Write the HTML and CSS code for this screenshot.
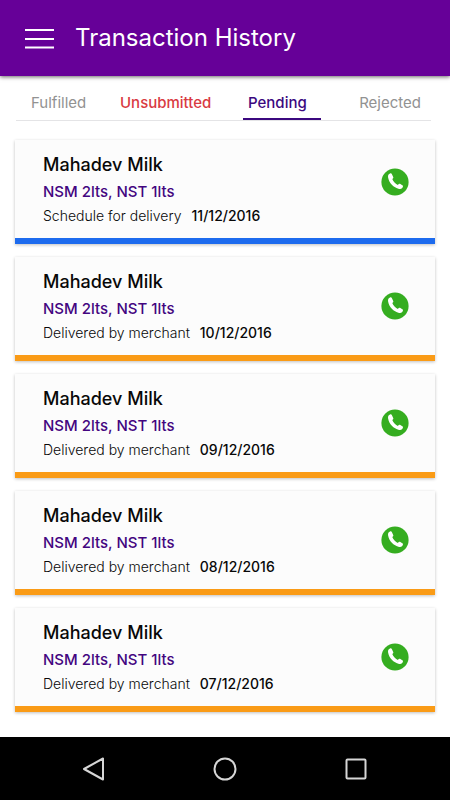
FILE: index.html
```html
<!DOCTYPE html>
<html lang="en">
<head>
<meta charset="utf-8">
<meta name="viewport" content="width=device-width, initial-scale=1">
<title>Transaction History</title>
<link rel="stylesheet" href="styles.css">
</head>
<body>
<svg class="sprite" aria-hidden="true">
  <symbol id="phone" viewBox="0 0 28 28">
    <circle cx="14" cy="14" r="13.6" fill="#35ad20"/>
    <path d="M9.4 5.2C7.5 5.8 6.7 7.4 7.1 9.6C8.1 15.2 12.5 19.8 18.1 20.9C20.4 21.3 22.2 20 22 17.8L19 15.8C18.2 15.4 17.6 16 16.9 17C14.7 16.2 12 13.3 11.3 11C12.3 10.3 12.6 9.8 12.2 9L10.7 5.8C10.4 5.2 9.9 5 9.4 5.2Z" fill="#fff"/>
  </symbol>
</svg>
<header class="app-bar">
  <button class="menu" aria-label="Menu">
    <svg width="30" height="22" viewBox="0 0 30 22"><path d="M0 3H29M0 12H29M0 20.5H29" stroke="#fff" stroke-width="1.8"/></svg>
  </button>
  <h1>Transaction History</h1>
</header>
<nav class="tabs">
  <a class="tab" href="#">Fulfilled</a>
  <a class="tab unsubmitted" href="#">Unsubmitted</a>
  <a class="tab active" href="#" aria-current="page">Pending</a>
  <a class="tab rejected" href="#">Rejected</a>
</nav>
<main class="list">
  <article class="card scheduled">
    <div class="details">
      <h2>Mahadev Milk</h2>
      <p class="items">NSM 2lts, NST 1lts</p>
      <p class="status"><span>Schedule for delivery</span><time datetime="2016-12-11">11/12/2016</time></p>
    </div>
    <button class="call" aria-label="Call"><svg width="28" height="28"><use href="#phone"/></svg></button>
  </article>
  <article class="card">
    <div class="details">
      <h2>Mahadev Milk</h2>
      <p class="items">NSM 2lts, NST 1lts</p>
      <p class="status"><span>Delivered by merchant</span><time datetime="2016-12-10">10/12/2016</time></p>
    </div>
    <button class="call" aria-label="Call"><svg width="28" height="28"><use href="#phone"/></svg></button>
  </article>
  <article class="card">
    <div class="details">
      <h2>Mahadev Milk</h2>
      <p class="items">NSM 2lts, NST 1lts</p>
      <p class="status"><span>Delivered by merchant</span><time datetime="2016-12-09">09/12/2016</time></p>
    </div>
    <button class="call" aria-label="Call"><svg width="28" height="28"><use href="#phone"/></svg></button>
  </article>
  <article class="card">
    <div class="details">
      <h2>Mahadev Milk</h2>
      <p class="items">NSM 2lts, NST 1lts</p>
      <p class="status"><span>Delivered by merchant</span><time datetime="2016-12-08">08/12/2016</time></p>
    </div>
    <button class="call" aria-label="Call"><svg width="28" height="28"><use href="#phone"/></svg></button>
  </article>
  <article class="card">
    <div class="details">
      <h2>Mahadev Milk</h2>
      <p class="items">NSM 2lts, NST 1lts</p>
      <p class="status"><span>Delivered by merchant</span><time datetime="2016-12-07">07/12/2016</time></p>
    </div>
    <button class="call" aria-label="Call"><svg width="28" height="28"><use href="#phone"/></svg></button>
  </article>
</main>
<footer class="system-bar">
  <button aria-label="Back"><svg width="26" height="26" viewBox="0 0 26 26"><path d="M22 2.5V23.5L3 13Z"/></svg></button>
  <button aria-label="Home"><svg width="26" height="26" viewBox="0 0 26 26"><circle cx="13" cy="13" r="10.5"/></svg></button>
  <button aria-label="Recent apps"><svg width="26" height="26" viewBox="0 0 26 26"><rect x="3.5" y="3.5" width="19" height="19" rx="1"/></svg></button>
</footer>
</body>
</html>
```
FILE: styles.css
```css
* { box-sizing: border-box; }

body {
  margin: 0;
  min-height: 100vh;
  display: flex;
  flex-direction: column;
  background: #fff;
  color: #080808;
  font-family: Inter, "Open Sans", sans-serif;
}

h1, h2, p { margin: 0; }

button {
  display: flex;
  padding: 0;
  border: 0;
  background: none;
  cursor: pointer;
}

.sprite {
  position: absolute;
  width: 0;
  height: 0;
}

.app-bar {
  display: flex;
  align-items: center;
  gap: 20px;
  padding: 22px 25px;
  background: #660098;
  color: #fff;
  box-shadow: 0 1px 4px rgba(0, 0, 0, 0.6);
}

h1 {
  font-size: 24px;
  line-height: 32px;
  font-weight: 400;
}

.tabs {
  display: grid;
  grid-template-columns: 89px 138px 78px 1fr;
  margin: 12px 19px 0 16px;
  border-bottom: 1px solid #e4e4e6;
}

.tab {
  padding-left: 15px;
  color: #929292;
  font-size: 15px;
  line-height: 30px;
  text-decoration: none;
}

.unsubmitted {
  color: #d93a42;
  font-weight: 500;
}

.active {
  padding-left: 5px;
  border-bottom: 2px solid #3b087f;
  color: #3b087f;
  font-weight: 500;
}

.rejected {
  padding: 0 10px 0 0;
  text-align: right;
}

.list {
  display: flex;
  flex-direction: column;
  gap: 13px;
  padding: 19px 15px 25px;
}

.card {
  display: flex;
  align-items: center;
  justify-content: space-between;
  padding: 11px 26px 11px 28px;
  border-bottom: 6px solid #fa9b16;
  background: #fcfcfc;
  box-shadow: 0 1px 3px rgba(0, 0, 0, 0.25);
}

.scheduled { border-color: #1d6bee; }

.scheduled .call { margin-bottom: 14px; }

h2 {
  font-size: 18px;
  line-height: 27px;
  font-weight: 500;
}

.items {
  color: #430580;
  font-size: 15px;
  line-height: 27px;
  font-weight: 500;
}

.status {
  display: flex;
  gap: 10px;
  font-size: 14px;
  line-height: 22px;
}

.status span { font-weight: 300; }

.status time { font-weight: 500; }

.system-bar {
  display: flex;
  flex: 1;
  align-items: center;
  justify-content: space-between;
  min-height: 60px;
  padding: 0 81px;
  background: #000;
}

.system-bar svg {
  fill: none;
  stroke: #d6d6d6;
  stroke-width: 2;
  stroke-linejoin: round;
}
```
